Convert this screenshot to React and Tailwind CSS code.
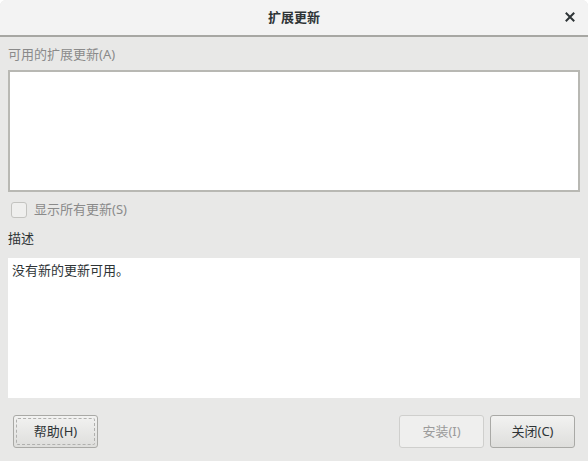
export default function App() {
  return (
    <div
      className="w-[588px] h-[461px] flex flex-col bg-[#e8e8e7] rounded-t-[6px] overflow-hidden text-[13px] text-[#2e3436]"
      style={{ fontFamily: '"Noto Sans", "Noto Sans CJK SC", sans-serif' }}
    >
      {/* Title bar */}
      <div className="h-[37px] shrink-0 flex items-center justify-center relative bg-[#f3f3f3] border-b-2 border-[#a7a7a3]">
        <span className="font-bold text-[13px] text-[#2e3436]">扩展更新</span>
        <button className="absolute right-[10px] top-[9px] w-[16px] h-[16px] flex items-center justify-center">
          <svg width="10" height="10" viewBox="0 0 10 10">
            <path d="M1.5 1.5 L8.5 8.5 M8.5 1.5 L1.5 8.5" stroke="#2e3436" strokeWidth="2" strokeLinecap="square" />
          </svg>
        </button>
      </div>

      {/* Body */}
      <div className="flex-1 flex flex-col px-[8px]">
        <div className="h-[33px] flex items-center text-[#8a8a8a] pt-[2px]">可用的扩展更新(A)</div>
        <div className="h-[122px] bg-white border-2 border-[#b8b8b3]"></div>

        <div className="h-[36px] flex items-center gap-[7px] pl-[3px]">
          <span className="w-[16px] h-[16px] rounded-[3px] border border-[#c3c3c0] bg-[#efefee]"></span>
          <span className="text-[#8a8a8a]">显示所有更新(S)</span>
        </div>
        <div className="h-[30px] leading-[20px]">描述</div>
        <div className="h-[140px] bg-white px-[4px] pt-[3px]">没有新的更新可用。</div>

        {/* Buttons */}
        <div className="flex items-center justify-between mt-[17px] px-[5px]">
          <button className="w-[85px] h-[33px] rounded-[3px] border border-[#a9a9a6] bg-gradient-to-b from-[#f2f2f1] to-[#dededc] p-[2px]">
            <span className="w-full h-full flex items-center justify-center border border-dashed border-[#b0b0ae] rounded-[2px] text-[#2e3436]">
              帮助(H)
            </span>
          </button>
          <div className="flex gap-[6px]">
            <button className="w-[85px] h-[33px] rounded-[3px] border border-[#cfcfcd] bg-[#efefee] text-[#9b9b9b]">
              安装(I)
            </button>
            <button className="w-[85px] h-[33px] rounded-[3px] border border-[#a9a9a6] bg-gradient-to-b from-[#f2f2f1] to-[#dededc] text-[#2e3436]">
              关闭(C)
            </button>
          </div>
        </div>
      </div>
    </div>
  );
}
